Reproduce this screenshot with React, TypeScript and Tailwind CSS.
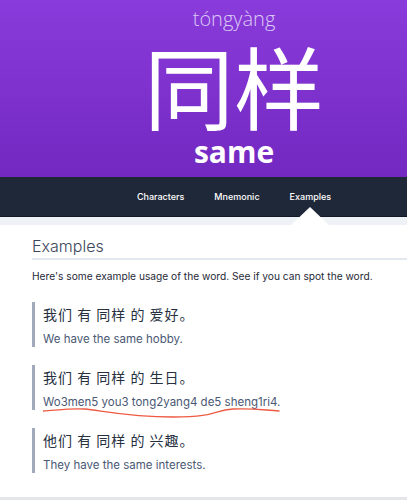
import React from "react";

const cjk = { fontFamily: '"Noto Sans CJK SC", "Noto Sans", sans-serif' };
const inter = { fontFamily: 'Inter, "Noto Sans CJK SC", sans-serif' };
const open = { fontFamily: '"Open Sans", "Noto Sans", sans-serif' };

function Quote({ zh, en, wavy }: { zh: string; en: string; wavy?: boolean }) {
  return (
    <div className="relative border-l-[3px] border-[#a0aabb] pl-[8px] pt-[1px]">
      <div className="h-[22px] text-[14px] leading-[22px] tracking-[1px] text-[#27303f]" style={cjk}>
        {zh}
      </div>
      <div className="mt-[6px] h-[16px] text-[11.5px] leading-[16px] text-[#4a5874]" style={inter}>
        {en}
      </div>
      {wavy && (
        <svg className="absolute left-[8px] top-[40px]" width="240" height="16" viewBox="0 0 240 16">
          <path
            d="M0 6 C 15 5, 28 3, 42 4 S 85 12, 130 12 S 170 5, 190 4 S 220 5, 236 6"
            fill="none"
            stroke="#ee5a42"
            strokeWidth="1.3"
            strokeLinecap="round"
          />
        </svg>
      )}
    </div>
  );
}

export default function App() {
  return (
    <div className="w-[407px] h-[500px] overflow-hidden bg-white relative">
      <div className="h-[177px] bg-gradient-to-b from-[#8a3bdb] to-[#7328c1] flex flex-col items-center pl-[61px] text-white">
        <div className="mt-[7px] text-[20px] leading-[24px] font-light text-[#dcc9f5]" style={open}>
          tóngyàng
        </div>
        <div className="mt-[5px] text-[90px] leading-[96px]" style={cjk}>
          同样
        </div>
        <div className="mt-[2px] text-[30px] leading-[36px] font-bold" style={open}>
          same
        </div>
      </div>
      <div className="relative h-[40px] bg-[#1f2838] border-b border-[#111827] flex items-center justify-center pl-[61px] gap-[30px] text-[9px] font-medium text-white" style={inter}>
        <span>Characters</span>
        <span>Mnemonic</span>
        <span>Examples</span>
      </div>
      <div className="relative h-[8px] bg-[#eef2f6]">
        <svg className="absolute left-[291px] top-[-10px]" width="38" height="18" viewBox="0 0 38 18">
          <polygon points="19,0 38,18 0,18" fill="#ffffff" />
        </svg>
      </div>
      <div className="pl-[32px]">
        <div className="pt-[11px] pb-[2px] text-[16px] leading-[20px] font-light text-[#3b4658] border-b-2 border-[#e3e8ef]" style={inter}>
          Examples
        </div>
        <div className="mt-[9px] text-[10.2px] leading-[14px] text-[#1f2937]" style={inter}>
          Here's some example usage of the word. See if you can spot the word.
        </div>
        <div className="mt-[19px] flex flex-col gap-[18px] pr-[10px]">
          <Quote zh="我们 有 同样 的 爱好。" en="We have the same hobby." />
          <Quote zh="我们 有 同样 的 生日。" en="Wo3men5 you3 tong2yang4 de5 sheng1ri4." wavy />
          <Quote zh="他们 有 同样 的 兴趣。" en="They have the same interests." />
        </div>
      </div>
      <div className="absolute left-0 right-0 bottom-0 h-[3px] bg-[#e4e6ea]" />
    </div>
  );
}
